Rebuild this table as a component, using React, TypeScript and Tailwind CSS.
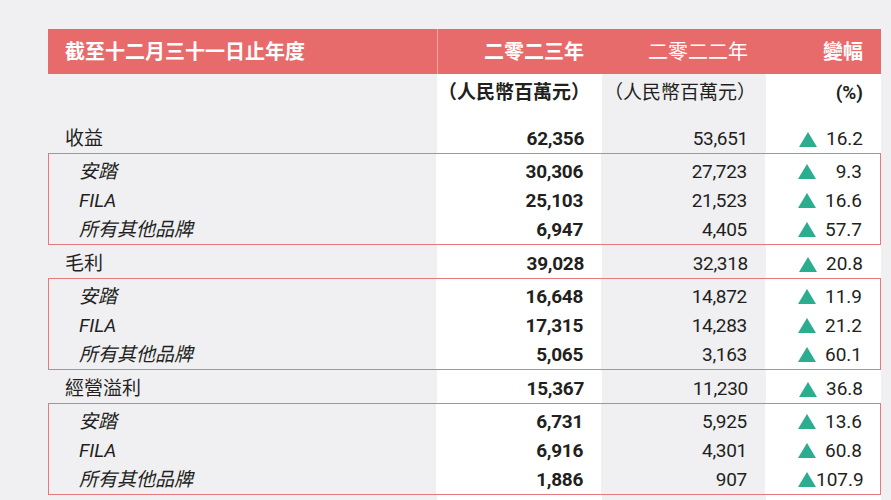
import type { ReactNode } from 'react'

type Line = { label: string; y23: string; y22: string; pct: string }

const sections: { main: Line; brands: Line[] }[] = [
  {
    main: { label: '收益', y23: '62,356', y22: '53,651', pct: '16.2' },
    brands: [
      { label: '安踏', y23: '30,306', y22: '27,723', pct: '9.3' },
      { label: 'FILA', y23: '25,103', y22: '21,523', pct: '16.6' },
      { label: '所有其他品牌', y23: '6,947', y22: '4,405', pct: '57.7' },
    ],
  },
  {
    main: { label: '毛利', y23: '39,028', y22: '32,318', pct: '20.8' },
    brands: [
      { label: '安踏', y23: '16,648', y22: '14,872', pct: '11.9' },
      { label: 'FILA', y23: '17,315', y22: '14,283', pct: '21.2' },
      { label: '所有其他品牌', y23: '5,065', y22: '3,163', pct: '60.1' },
    ],
  },
  {
    main: { label: '經營溢利', y23: '15,367', y22: '11,230', pct: '36.8' },
    brands: [
      { label: '安踏', y23: '6,731', y22: '5,925', pct: '13.6' },
      { label: 'FILA', y23: '6,916', y22: '4,301', pct: '60.8' },
      { label: '所有其他品牌', y23: '1,886', y22: '907', pct: '107.9' },
    ],
  },
]

function UpArrow() {
  return (
    <svg width="18" height="15" viewBox="0 0 18 15" className="shrink-0">
      <polygon points="9,0 18,15 0,15" fill="#2bae8f" />
    </svg>
  )
}

// one horizontal strip; column backgrounds are painted per cell so the stripes run through the boxes
function Row({ h, left, c2, c3, c4 }: { h: string; left?: ReactNode; c2?: ReactNode; c3?: ReactNode; c4?: ReactNode }) {
  return (
    <div className={`flex ${h}`}>
      <div className="flex-1 bg-[#f0f0f3] flex items-center">{left}</div>
      <div className="w-[165px] bg-white flex items-center justify-end pr-[18px]">{c2}</div>
      <div className="w-[164px] bg-[#f0f0f3] flex items-center justify-end pr-[18px]">{c3}</div>
      <div className="w-[115px] bg-white flex items-center pl-[33px] pr-[18px]">{c4}</div>
    </div>
  )
}

function Pct({ v }: { v: string }) {
  return (
    <>
      <UpArrow />
      <span className="flex-1 text-right">{v}</span>
    </>
  )
}

export default function App() {
  return (
    <div
      className="w-[891px] h-[500px] overflow-hidden bg-[#f0f0f3] pt-[29px] pl-[48px] pr-[10px] text-[#231f20] text-[19px] leading-[28px]"
      style={{ fontFamily: 'Roboto, "Noto Sans CJK TC", sans-serif' }}
    >
      {/* header */}
      <div className="flex h-[45px] bg-[#e86b6c] text-white text-[20px]">
        <div className="flex-1 flex items-center pl-[17px] font-bold">截至十二月三十一日止年度</div>
        <div className="w-[165px] flex items-center justify-end pr-[18px] font-bold border-l border-[#f3a3a3]">二零二三年</div>
        <div className="w-[164px] flex items-center justify-end pr-[18px]">二零二二年</div>
        <div className="w-[115px] flex items-center justify-end pr-[18px] font-bold">變幅</div>
      </div>

      {/* units */}
      <div className="flex h-[46px] text-[19px]">
        <div className="flex-1 bg-[#f0f0f3]" />
        <div className="w-[165px] bg-white flex items-start justify-end pr-[12px] pt-[5px] font-bold">（人民幣百萬元）</div>
        <div className="w-[164px] bg-[#f0f0f3] flex items-start justify-end pr-[10px] pt-[5px]">（人民幣百萬元）</div>
        <div className="w-[115px] bg-white flex items-start justify-end pr-[18px] pt-[5px] font-bold">(%)</div>
      </div>

      {sections.map((s) => (
        <div key={s.main.label}>
          <div className="flex h-[33px]">
            <div className="flex-1 bg-[#f0f0f3] pt-[5px] pl-[17px]">{s.main.label}</div>
            <div className="w-[165px] bg-white pt-[5px] pr-[18px] text-right font-bold tracking-[-0.3px]">{s.main.y23}</div>
            <div className="w-[164px] bg-[#f0f0f3] pt-[5px] pr-[18px] text-right tracking-[-0.3px]">{s.main.y22}</div>
            <div className="w-[115px] bg-white pt-[5px] pl-[33px] pr-[18px] flex items-start">
              <div className="flex items-center h-[28px] w-full">
                <Pct v={s.main.pct} />
              </div>
            </div>
          </div>
          <div className="border border-[#e6797f]">
            <Row h="h-[3px]" />
            {s.brands.map((b) => (
              <Row
                key={b.label}
                h="h-[29px]"
                left={<span className="pl-[30px] italic">{b.label}</span>}
                c2={<span className="font-bold tracking-[-0.3px]">{b.y23}</span>}
                c3={<span className="tracking-[-0.3px]">{b.y22}</span>}
                c4={<Pct v={b.pct} />}
              />
            ))}
          </div>
        </div>
      ))}
      <Row h="h-[10px]" />
    </div>
  )
}
